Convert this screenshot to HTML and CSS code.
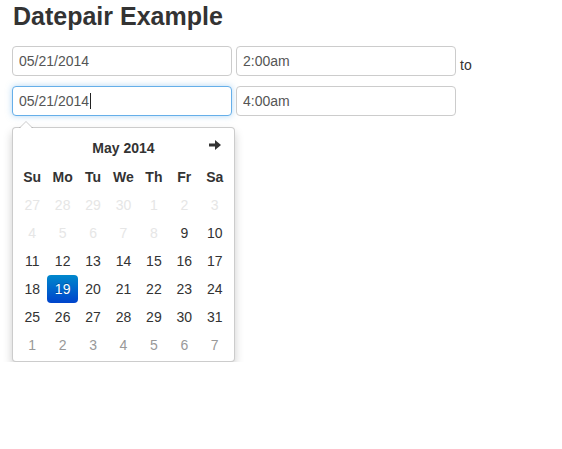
FILE: index.html
```html
<!DOCTYPE html>
<html>
<head>
<meta charset="utf-8">
<title>Datepair Example</title>
<link rel="stylesheet" href="styles.css">
</head>
<body>
<h1 class="title">Datepair Example</h1>
<div class="pair">
  <div class="row">
    <input class="field" type="text" value="05/21/2014">
    <input class="field" type="text" value="2:00am">
    <span class="to">to</span>
  </div>
  <div class="row">
    <div class="field focus">05/21/2014<span class="caret"></span></div>
    <input class="field" type="text" value="4:00am">
  </div>
</div>
<div class="picker">
  <table class="cal">
    <thead>
      <tr class="head">
        <th class="nav"></th>
        <th class="month" colspan="5">May 2014</th>
        <th class="nav next"><svg class="arrow" width="12" height="10" viewBox="0 0 12 10"><rect x="0" y="3.5" width="7" height="3" fill="#333"/><polygon points="6,0 12,5 6,10" fill="#333"/></svg></th>
      </tr>
      <tr class="dow">
        <th>Su</th><th>Mo</th><th>Tu</th><th>We</th><th>Th</th><th>Fr</th><th>Sa</th>
      </tr>
    </thead>
    <tbody>
      <tr><td class="off">27</td><td class="off">28</td><td class="off">29</td><td class="off">30</td><td class="off">1</td><td class="off">2</td><td class="off">3</td></tr>
      <tr><td class="off">4</td><td class="off">5</td><td class="off">6</td><td class="off">7</td><td class="off">8</td><td>9</td><td>10</td></tr>
      <tr><td>11</td><td>12</td><td>13</td><td>14</td><td>15</td><td>16</td><td>17</td></tr>
      <tr><td>18</td><td class="active">19</td><td>20</td><td>21</td><td>22</td><td>23</td><td>24</td></tr>
      <tr><td>25</td><td>26</td><td>27</td><td>28</td><td>29</td><td>30</td><td>31</td></tr>
      <tr><td class="new">1</td><td class="new">2</td><td class="new">3</td><td class="new">4</td><td class="new">5</td><td class="new">6</td><td class="new">7</td></tr>
    </tbody>
  </table>
</div>
</body>
</html>
```

FILE: styles.css
```css
html, body {
  margin: 0;
  padding: 0;
  background: #fff;
}
body {
  padding: 0 12px;
  font-family: "Liberation Sans", Arial, Helvetica, sans-serif;
  font-size: 14px;
  color: #333;
}
.title {
  margin: 3px 0 0 1px;
  font-size: 25px;
  line-height: 26px;
  font-weight: bold;
  color: #333;
}
.pair {
  margin-top: 17px;
}
.row {
  display: flex;
  align-items: flex-end;
  gap: 4px;
}
.row + .row {
  margin-top: 10px;
}
.field {
  box-sizing: border-box;
  width: 220px;
  height: 30px;
  margin: 0;
  padding: 0 6px;
  border: 1px solid #ccc;
  border-radius: 4px;
  background: #fff;
  font-family: "Liberation Sans", Arial, Helvetica, sans-serif;
  font-size: 14px;
  color: #555;
  outline: none;
}
div.field {
  display: flex;
  align-items: center;
}
.focus {
  border-color: #66afe9;
  box-shadow: 0 0 6px rgba(102, 175, 233, 0.5);
}
.caret {
  display: inline-block;
  width: 1px;
  height: 16px;
  margin-left: 1px;
  background: #222;
}
.to {
  line-height: 20px;
  margin-bottom: 1px;
  color: #333;
}
.picker {
  position: relative;
  box-sizing: border-box;
  width: 223px;
  margin-top: 11px;
  padding: 4px 4px 2px;
  background: #fff;
  border: 1px solid rgba(0, 0, 0, 0.2);
  border-radius: 4px;
  box-shadow: 0 5px 10px rgba(0, 0, 0, 0.2);
}
.picker::before {
  content: "";
  position: absolute;
  top: -7px;
  left: 6px;
  border-left: 7px solid transparent;
  border-right: 7px solid transparent;
  border-bottom: 7px solid rgba(0, 0, 0, 0.2);
}
.picker::after {
  content: "";
  position: absolute;
  top: -6px;
  left: 7px;
  border-left: 6px solid transparent;
  border-right: 6px solid transparent;
  border-bottom: 6px solid #fff;
}
.cal {
  width: 100%;
  table-layout: fixed;
  border-collapse: separate;
  border-spacing: 0;
}
.cal th, .cal td {
  padding: 0;
  text-align: center;
  font-size: 14px;
  color: #333;
}
.cal th {
  font-weight: bold;
}
.head th {
  height: 31px;
}
.arrow {
  display: block;
  margin: -6px auto 0;
}
.dow th {
  height: 28px;
}
.cal td {
  height: 28px;
  border-radius: 4px;
}
.cal td.off {
  color: #e6e6e6;
}
.cal td.new {
  color: #999;
}
.cal td.active {
  background: linear-gradient(to bottom, #0088cc, #0044cc);
  color: #fff;
  text-shadow: 0 -1px 0 rgba(0, 0, 0, 0.25);
}
```
